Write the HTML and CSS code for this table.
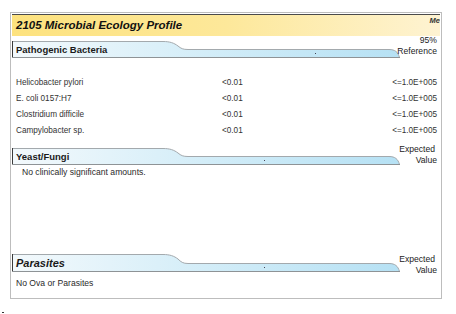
FILE: index.html
```html
<!DOCTYPE html>
<html>
<head>
<meta charset="utf-8">
<link rel="stylesheet" href="styles.css">
</head>
<body>
<div class="frame">
  <div class="titlebar">
    <span class="title">2105 Microbial Ecology Profile</span>
    <span class="brand">Me</span>
  </div>

  <div class="sect-head sh-path">
    <svg class="tab" width="388" height="17" viewBox="0 0 388 17">
      <defs>
        <linearGradient id="g1" x1="0" y1="0" x2="1" y2="0">
          <stop offset="0" stop-color="#f3f9fc"/>
          <stop offset="0.5" stop-color="#d3edf8"/>
          <stop offset="1" stop-color="#b6e1f4"/>
        </linearGradient>
      </defs>
      <path d="M0.5,16.5 V0.5 H151 C158,0.5 162,2 166,5 C169,7.5 171,8.5 176,8.5 H377 C383,8.5 386,11 387.5,16.5 Z" fill="url(#g1)"/>
      <path d="M0.5,0.5 H151 C158,0.5 162,2 166,5 C169,7.5 171,8.5 176,8.5 H377 C383,8.5 386,11 387.5,16.5" fill="none" stroke="#a3a9ad" stroke-width="1"/>
      <path d="M0.5,0 V17" stroke="#3a3a3a" stroke-width="1"/>
      <path d="M0,16.5 H388" stroke="#8e9396" stroke-width="1"/>
      <rect x="303" y="12" width="1" height="1" fill="#445"/>
    </svg>
    <span class="sect-title">Pathogenic Bacteria</span>
    <span class="sect-ref ref-path"><span>95%</span><span>Reference</span></span>
  </div>

  <div class="rows">
    <span>Helicobacter pylori</span><span>&lt;0.01</span><span class="r">&lt;=1.0E+005</span>
    <span>E. coli 0157:H7</span><span>&lt;0.01</span><span class="r">&lt;=1.0E+005</span>
    <span>Clostridium difficile</span><span>&lt;0.01</span><span class="r">&lt;=1.0E+005</span>
    <span>Campylobacter sp.</span><span>&lt;0.01</span><span class="r">&lt;=1.0E+005</span>
  </div>

  <div class="sect-head sh-yeast">
    <svg class="tab" width="388" height="17" viewBox="0 0 388 17">
      <defs>
        <linearGradient id="g2" x1="0" y1="0" x2="1" y2="0">
          <stop offset="0" stop-color="#f3f9fc"/>
          <stop offset="0.5" stop-color="#d3edf8"/>
          <stop offset="1" stop-color="#b6e1f4"/>
        </linearGradient>
      </defs>
      <path d="M0.5,16.5 V0.5 H151 C158,0.5 162,2 166,5 C169,7.5 171,8.5 176,8.5 H377 C383,8.5 386,11 387.5,16.5 Z" fill="url(#g2)"/>
      <path d="M0.5,0.5 H151 C158,0.5 162,2 166,5 C169,7.5 171,8.5 176,8.5 H377 C383,8.5 386,11 387.5,16.5" fill="none" stroke="#a3a9ad" stroke-width="1"/>
      <path d="M0.5,0 V17" stroke="#3a3a3a" stroke-width="1"/>
      <path d="M0,16.5 H388" stroke="#8e9396" stroke-width="1"/>
      <rect x="252" y="12" width="1" height="1" fill="#445"/>
    </svg>
    <span class="sect-title">Yeast/Fungi</span>
    <span class="sect-ref ref-yeast"><span class="exp">Expected</span><span>Value</span></span>
  </div>
  <div class="note indent">No clinically significant amounts.</div>

  <div class="spacer"></div>

  <div class="sect-head sh-para">
    <svg class="tab" width="388" height="18" viewBox="0 0 388 18">
      <defs>
        <linearGradient id="g3" x1="0" y1="0" x2="1" y2="0">
          <stop offset="0" stop-color="#f3f9fc"/>
          <stop offset="0.5" stop-color="#d3edf8"/>
          <stop offset="1" stop-color="#b6e1f4"/>
        </linearGradient>
      </defs>
      <path d="M0.5,17.5 V0.5 H151 C158,0.5 162,2 166,5 C169,8 171,9.5 176,9.5 H377 C383,9.5 386,12 387.5,17.5 Z" fill="url(#g3)"/>
      <path d="M0.5,0.5 H151 C158,0.5 162,2 166,5 C169,8 171,9.5 176,9.5 H377 C383,9.5 386,12 387.5,17.5" fill="none" stroke="#a3a9ad" stroke-width="1"/>
      <path d="M0.5,0 V18" stroke="#3a3a3a" stroke-width="1"/>
      <path d="M0,17.5 H388" stroke="#8e9396" stroke-width="1"/>
      <rect x="252" y="13" width="1" height="1" fill="#445"/>
    </svg>
    <span class="sect-title big">Parasites</span>
    <span class="sect-ref ref-para"><span class="exp">Expected</span><span>Value</span></span>
  </div>
  <div class="note">No Ova or Parasites</div>
</div>
<div class="mark"></div>
</body>
</html>
```

FILE: styles.css
```css
html, body {
  margin: 0;
  padding: 0;
  background: #fff;
}
body {
  font-family: "Liberation Sans", Arial, sans-serif;
  color: #2a2a2a;
  width: 456px;
  height: 314px;
  overflow: hidden;
}
.frame {
  box-sizing: border-box;
  margin: 12px 0 0 10px;
  width: 432px;
  height: 287px;
  border: 1px solid #bdbdbd;
  padding: 1px 1px 0 1px;
  display: flex;
  flex-direction: column;
}
.titlebar {
  box-sizing: border-box;
  height: 22px;
  border-top: 1px solid #4a4a4a;
  background: linear-gradient(to right, #fde27e 0%, #fde89a 50%, #fef3d2 100%);
  display: flex;
  justify-content: space-between;
  align-items: flex-start;
  padding-left: 4px;
  overflow: hidden;
}
.title {
  font-weight: bold;
  font-style: italic;
  font-size: 11.5px;
  line-height: 20px;
  color: #111;
}
.brand {
  font-weight: bold;
  font-style: italic;
  font-size: 7.5px;
  line-height: 12px;
  color: #333;
  padding-right: 0;
}
.sect-head {
  position: relative;
  display: flex;
  justify-content: space-between;
  align-items: flex-end;
}
.sh-path { height: 21px; margin-top: 1px; }
.sh-yeast { height: 22px; margin-top: 4px; }
.sh-para { height: 23px; }
.tab {
  position: absolute;
  left: 0;
  bottom: 0;
}
.sect-title {
  position: relative;
  font-weight: bold;
  font-size: 9.5px;
  line-height: 16px;
  padding-left: 4px;
  color: #1a1a1a;
}
.sect-title.big {
  font-style: italic;
  font-size: 11px;
  line-height: 17px;
}
.sect-ref {
  position: relative;
  display: flex;
  flex-direction: column;
  align-items: flex-end;
  font-size: 8.6px;
  line-height: 11px;
  padding-right: 3px;
  color: #222;
}
.ref-path { margin-bottom: 1px; }
.ref-yeast { margin-bottom: -1px; }
.ref-para { margin-bottom: -4px; }
.sect-ref .exp { margin-right: 2px; }
.rows {
  display: grid;
  grid-template-columns: 206px 1fr auto;
  font-size: 8.2px;
  line-height: 16px;
  padding: 17px 3px 0 4px;
  color: #333;
}
.rows .r { text-align: right; }
.note {
  font-size: 8.6px;
  line-height: 13px;
  padding-left: 4px;
  padding-top: 1px;
}
.note.indent { padding-left: 10px; }
.spacer { flex: 1; }
.frame > .note:last-child { margin-bottom: 8px; margin-top: 4px; }
.mark {
  position: absolute;
  left: 2px;
  top: 312px;
  width: 2px;
  height: 1px;
  background: #333;
}
```
